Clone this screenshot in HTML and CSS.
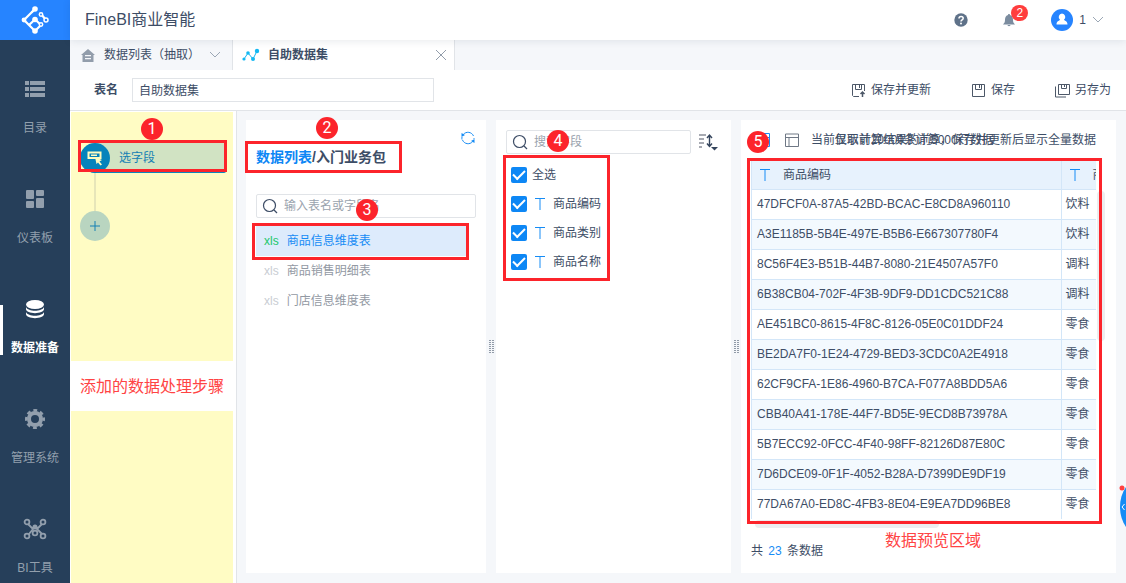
FILE: index.html
```html
<!DOCTYPE html>
<html lang="zh-CN">
<head>
<meta charset="utf-8">
<title>FineBI商业智能</title>
<link rel="stylesheet" href="styles.css">
</head>
<body>
<div class="app">
  <nav class="sidebar">
    <a class="logo" href="#" aria-label="FineBI">
      <svg width="28" height="28" viewBox="0 0 28 28" fill="none" stroke="#fff" stroke-width="2.2">
        <path d="M14 3L3 14l11 11"/><path d="M14 3l-3.500 3.500M14 25l6-6"/><path d="M8 19l6-5.500 5 4.500M20 8l5 6"/>
        <g fill="#fff" stroke="none"><circle cx="14" cy="3" r="2.800"/><circle cx="3" cy="14" r="2.400"/><circle cx="14" cy="13.500" r="2.800"/><circle cx="14" cy="25" r="2.800"/></g>
        <g fill="#2684ff" stroke-width="1.500"><circle cx="20" cy="8.500" r="1.700"/><circle cx="25" cy="14" r="2"/><circle cx="20" cy="18.500" r="1.700"/></g>
      </svg>
    </a>
    <a class="nav-item" href="#">
      <svg width="22" height="22" viewBox="0 0 22 22" fill="currentColor"><path d="M1 3h4v4H1zM6 3h15v4H6zM1 9h4v4H1zM6 9h15v4H6zM1 15h4v4H1zM6 15h15v4H6z"/></svg>
      <span>目录</span>
    </a>
    <a class="nav-item" href="#">
      <svg width="22" height="22" viewBox="0 0 22 22" fill="currentColor"><rect x="2" y="2" width="8" height="9" rx="1"/><rect x="12" y="2" width="8" height="6" rx="1"/><rect x="2" y="13" width="8" height="7" rx="1"/><rect x="12" y="10" width="8" height="10" rx="1"/></svg>
      <span>仪表板</span>
    </a>
    <a class="nav-item active" href="#">
      <svg width="22" height="22" viewBox="0 0 22 22" fill="currentColor"><ellipse cx="11" cy="6.500" rx="9" ry="4.500"/><path d="M2 9c2 5 16 5 18 0v2c0 5.500-18 5.500-18 0zM2 14c2 5 16 5 18 0v2c0 5.500-18 5.500-18 0z"/></svg>
      <span>数据准备</span>
    </a>
    <a class="nav-item" href="#">
      <svg width="22" height="22" viewBox="0 0 22 22" fill="none" stroke="currentColor"><circle cx="11" cy="11" r="6" stroke-width="4"/><circle cx="11" cy="11" r="8.700" stroke-width="2.600" stroke-dasharray="3.830 3" stroke-dashoffset="1.900"/></svg>
      <span>管理系统</span>
    </a>
    <a class="nav-item" href="#">
      <svg width="24" height="22" viewBox="0 0 24 22" fill="none" stroke="currentColor" stroke-width="1.800"><path d="M5 6l5 5-4 5M19 6l-5 5 5 5M9 11l3-3 3 3"/><circle cx="4" cy="4" r="2.400"/><circle cx="20" cy="4" r="2.400"/><circle cx="4" cy="18" r="2.400"/><circle cx="20" cy="18" r="2.400"/><circle cx="12" cy="15" r="2.400"/><circle cx="12" cy="9" r="1.600"/></svg>
      <span>BI工具</span>
    </a>
  </nav>

  <div class="main">
    <header class="topbar">
      <h1>FineBI商业智能</h1>
      <button class="icon-btn" aria-label="帮助">
        <svg width="14" height="14" viewBox="0 0 14 14"><circle cx="7" cy="7" r="6.700" fill="#5f7289"/><path d="M5 5.500c0-2.800 4.200-2.600 4.200-.2C9.200 6.900 7 6.800 7 8.500" fill="none" stroke="#fff" stroke-width="1.500"/><circle cx="7" cy="10.600" r="1" fill="#fff"/></svg>
      </button>
      <button class="icon-btn bell" aria-label="通知">
        <svg width="12" height="14" viewBox="0 0 12 14" fill="#7b8c9f"><path d="M6 1c.8 0 1 .6 1 1 2.500.6 3 3 3 5 0 2.500.8 3 2 4.500H0C1.200 10 2 9.500 2 7c0-2 .5-4.400 3-5 0-.4.200-1 1-1zM4.500 12h3c0 1.500-3 1.500-3 0z"/></svg>
        <span class="count">2</span>
      </button>
      <button class="user">
        <svg width="22" height="22" viewBox="0 0 22 22"><circle cx="11" cy="11" r="11" fill="#2684ff"/><path d="M11 4.500a3.500 3.500 0 0 1 2 6.200c0 1 3.500.8 3.500 4.800H5.500c0-4 3.500-3.800 3.500-4.800a3.500 3.500 0 0 1 2-6.200z" fill="#fff"/></svg>
        <span>1</span>
        <svg width="12" height="8" viewBox="0 0 12 8" fill="none" stroke="#9ba7b5"><path d="M1 1l5 5 5-5"/></svg>
      </button>
    </header>

    <div class="tabs">
      <a class="tab list-tab" href="#">
        <svg width="14" height="13" viewBox="0 0 14 13"><path d="M7 0l7 6h-1.500v7h-11V6H0z" fill="#929dab"/><path d="M4 6h6v1.300H4zM4 9h6v1.300H4z" fill="#f5f7fa"/></svg>
        <span>数据列表（抽取）</span>
        <svg width="12" height="8" viewBox="0 0 12 8" fill="none" stroke="#9ba7b5"><path d="M1 1l5 5 5-5"/></svg>
      </a>
      <div class="tab current">
        <svg width="18" height="14" viewBox="0 0 18 14" fill="#14b8f2"><path d="M2 11l4-6 5 6 4-8" fill="none" stroke="#14b8f2"/><circle cx="2" cy="11" r="1.600"/><circle cx="6" cy="5" r="1.800"/><circle cx="11" cy="11" r="2"/><circle cx="15" cy="3" r="2.200"/></svg>
        <span>自助数据集</span>
        <button class="icon-btn close" aria-label="关闭"><svg width="12" height="12" viewBox="0 0 12 12" stroke="#929dab"><path d="M1 1l10 10M11 1L1 11"/></svg></button>
      </div>
    </div>

    <div class="toolbar">
      <label for="table-name">表名</label>
      <input class="field name-field" id="table-name" type="text" value="自助数据集">
      <div class="actions">
        <button class="action"><svg width="15" height="15" viewBox="0 0 15 15" fill="none" stroke="#4d5868"><path d="M8 13.500H2.500l-1-1v-11h12V8M4.500 1.500v5h6v-5M8.500 2v3"/><path d="M11.500 14v-5M9.500 11l2-2 2 2" stroke-width="1.500"/></svg>保存并更新</button>
        <button class="action"><svg width="15" height="15" viewBox="0 0 15 15" fill="none" stroke="#4d5868"><path d="M1.500 1.500h12v12h-12zM4.500 1.500v5h6v-5M8.500 2v3"/></svg>保存</button>
        <button class="action"><svg width="15" height="15" viewBox="0 0 15 15" fill="none" stroke="#4d5868"><path d="M3.500 1.500h11v10h-11zM6.500 1.500v4h5v-4M9.500 2v2M.5 3.500v10.500H11"/></svg>另存为</button>
      </div>
    </div>

    <div class="workspace">
      <aside class="steps">
        <div class="steps-top">
          <div class="step-wrap">
            <button class="step"><span class="step-icon"><svg width="16" height="16" viewBox="0 0 16 16"><path d="M1.500 2.500h12v5.500h-12z" fill="none" stroke="#fffcc0" stroke-width="2"/><path d="M4 4.500h6v1.500H4z" fill="#fffcc0"/><path d="M8 7l7 3-2.500 1.500 2.500 3-1.500 1-2.500-3L9.500 14z" fill="#fffcc0"/></svg></span>选字段</button>
            <span class="mark-box"></span><span class="mark-num">1</span>
          </div>
          <span class="connector"></span>
          <button class="add" aria-label="添加步骤"><svg width="10" height="10" viewBox="0 0 10 10" stroke="#1480b4"><path d="M5 0v10M0 5h10"/></svg></button>
        </div>
        <p class="note steps-note">添加的数据处理步骤</p>
        <div class="steps-rest"></div>
      </aside>

      <div class="panels">
        <section class="panel tables">
          <button class="icon-btn refresh" aria-label="刷新"><svg width="14" height="14" viewBox="0 0 14 14" fill="none" stroke="#168cf5"><path d="M2.300 3.500A6 6 0 0 1 12.500 5M11.700 10.500A6 6 0 0 1 1.500 9M1 8.500a6 6 0 0 1 0-2.500M13 8a6 6 0 0 0 0-1"/><path d="M.5 2v4l3.500-2zM13.500 12V8L10 10z" fill="#168cf5" stroke="none"/></svg></button>
          <div class="crumbs"><a href="#">数据列表</a>/入门业务包
            <span class="mark-box"></span><span class="mark-num">2</span>
          </div>
          <div class="search">
            <svg width="16" height="16" viewBox="0 0 16 16" fill="none" stroke="#3d4d66" stroke-width="1.200"><circle cx="7.500" cy="7.500" r="6"/><path d="M12 12l3 3"/></svg>
            <input type="text" aria-label="输入表名或字段名" placeholder="输入表名或字段名">
            <span class="mark-num">3</span>
          </div>
          <ul class="table-list">
            <li><a class="selected" href="#"><b>xls</b>商品信息维度表<span class="mark-box"></span></a></li>
            <li><a href="#"><b>xls</b>商品销售明细表</a></li>
            <li><a href="#"><b>xls</b>门店信息维度表</a></li>
          </ul>
        </section>
        <div class="grip"><svg width="5" height="13" viewBox="0 0 5 13"><path d="M1 0v13M4 0v13" stroke="#5c6b7d" stroke-width="1.300" stroke-dasharray="1 1"/></svg></div>

        <section class="panel fields">
          <div class="search-row">
            <div class="search">
              <svg width="16" height="16" viewBox="0 0 16 16" fill="none" stroke="#3d4d66" stroke-width="1.200"><circle cx="7.500" cy="7.500" r="6"/><path d="M12 12l3 3"/></svg>
              <input type="text" aria-label="搜索字段" placeholder="搜索字段">
              <span class="mark-num">4</span>
            </div>
            <button class="icon-btn" aria-label="排序"><svg width="20" height="18" viewBox="0 0 20 18" fill="none" stroke="#8a8f99" stroke-width="1.600"><path d="M1 2h7M1 6h5M1 10h5M1 14h3"/><path d="M11.500 2v11M9 5l2.500-3L14 5M9 10.500l2.500 3 2.500-3" stroke="#34445c" stroke-width="1.400"/><path d="M13 14h7l-3.500 3.500z" fill="#34445c" stroke="none"/></svg></button>
          </div>
          <div class="checks">
            <label><input type="checkbox" checked>全选</label>
            <label><input type="checkbox" checked><svg class="type" width="10" height="12" viewBox="0 0 10 12"><path d="M0 .5h10M5 1v11" stroke="#168cf5"/></svg>商品编码</label>
            <label><input type="checkbox" checked><svg class="type" width="10" height="12" viewBox="0 0 10 12"><path d="M0 .5h10M5 1v11" stroke="#168cf5"/></svg>商品类别</label>
            <label><input type="checkbox" checked><svg class="type" width="10" height="12" viewBox="0 0 10 12"><path d="M0 .5h10M5 1v11" stroke="#168cf5"/></svg>商品名称</label>
            <span class="mark-box"></span>
          </div>
        </section>
        <div class="grip"><svg width="5" height="13" viewBox="0 0 5 13"><path d="M1 0v13M4 0v13" stroke="#5c6b7d" stroke-width="1.300" stroke-dasharray="1 1"/></svg></div>

        <section class="panel preview">
          <div class="preview-bar">
            <button class="icon-btn" aria-label="数据视图"><svg width="14" height="14" viewBox="0 0 14 14" fill="none" stroke="#168cf5"><path d="M.5.5h13v13H.5zM.5 4.500h13M5 4.500v9"/></svg></button>
            <button class="icon-btn" aria-label="字段视图"><svg width="14" height="14" viewBox="0 0 14 14" fill="none" stroke="#6f7885"><path d="M.5 1h13v12.500H.5zM.5 4.500h13M4 4.500v9"/></svg></button>
            <div class="hints"><span>当前显示计算结果的前5000行数据</span><span>仅取前20000条计算，保存并更新后显示全量数据</span></div>
            <span class="mark-num">5</span>
          </div>
          <div class="grid">
            <div class="grid-view">
              <table>
                <colgroup><col class="code-col"><col class="kind-col"></colgroup>
                <thead><tr>
                  <th><svg class="type" width="10" height="12" viewBox="0 0 10 12"><path d="M0 .5h10M5 1v11" stroke="#168cf5"/></svg>商品编码</th>
                  <th><svg class="type" width="10" height="12" viewBox="0 0 10 12"><path d="M0 .5h10M5 1v11" stroke="#168cf5"/></svg>商品类别</th>
                </tr></thead>
                <tbody>
                  <tr><td>47DFCF0A-87A5-42BD-BCAC-E8CD8A960110</td><td>饮料</td></tr>
                  <tr><td>A3E1185B-5B4E-497E-B5B6-E667307780F4</td><td>饮料</td></tr>
                  <tr><td>8C56F4E3-B51B-44B7-8080-21E4507A57F0</td><td>调料</td></tr>
                  <tr><td>6B38CB04-702F-4F3B-9DF9-DD1CDC521C88</td><td>调料</td></tr>
                  <tr><td>AE451BC0-8615-4F8C-8126-05E0C01DDF24</td><td>零食</td></tr>
                  <tr><td>BE2DA7F0-1E24-4729-BED3-3CDC0A2E4918</td><td>零食</td></tr>
                  <tr><td>62CF9CFA-1E86-4960-B7CA-F077A8BDD5A6</td><td>零食</td></tr>
                  <tr><td>CBB40A41-178E-44F7-BD5E-9ECD8B73978A</td><td>零食</td></tr>
                  <tr><td>5B7ECC92-0FCC-4F40-98FF-82126D87E80C</td><td>零食</td></tr>
                  <tr><td>7D6DCE09-0F1F-4052-B28A-D7399DE9DF19</td><td>零食</td></tr>
                  <tr><td>77DA67A0-ED8C-4FB3-8E04-E9EA7DD96BE8</td><td>零食</td></tr>
                </tbody>
              </table>
            </div>
            <span class="bar-v"></span><span class="bar-h"></span>
            <span class="mark-box"></span>
          </div>
          <div class="total">
            <span>共 <em>23</em> 条数据</span>
            <p class="note preview-note">数据预览区域</p>
          </div>
        </section>
      </div>
    </div>
  </div>
  <button class="assistant" aria-label="展开助手"><svg width="7" height="54" viewBox="0 0 7 54"><path d="M7 7C-1 18-1 36 7 47z" fill="#168cf5"/><path d="M5.500 24L3 27l2.500 3" fill="none" stroke="#fff"/><circle cx="3" cy="8" r="2.500" fill="#ff4040"/></svg></button>
</div>
</body>
</html>
```
FILE: styles.css
```css
* { box-sizing: border-box; }
body {
  margin: 0;
  color: #3d4d66;
  font: 12px/20px "Liberation Sans", "Noto Sans CJK SC", sans-serif;
}
button, input { font: inherit; color: inherit; }
button { padding: 0; border: 0; background: none; cursor: pointer; }
a { color: inherit; text-decoration: none; }
p, h1, ul { margin: 0; padding: 0; }
svg { display: block; flex: none; }
.app { display: flex; height: 100vh; overflow: hidden; position: relative; }

/* Sidebar */
.sidebar { flex: none; width: 70px; background: #263f5a; color: #929fad; overflow: hidden; }
.logo { display: flex; align-items: center; justify-content: center; height: 40px; margin-bottom: 13px; background: #2684ff; }
.nav-item { display: flex; flex-direction: column; align-items: center; justify-content: center; gap: 18px; height: 110px; position: relative; }
.nav-item.active { color: #fff; font-weight: bold; }
.nav-item.active::before { content: ""; position: absolute; left: 0; top: 32px; width: 3px; height: 50px; background: #fff; }

/* Header */
.main { flex: 1; min-width: 0; display: flex; flex-direction: column; }
.topbar { display: flex; align-items: center; height: 40px; padding: 0 22px 0 15px; position: relative; box-shadow: 0 1px 8px #0f29481a; background: #fff; }
.topbar h1 { flex: 1; font-size: 16px; font-weight: normal; }
.icon-btn { flex: none; display: flex; }
.bell { margin: 0 36px 0 35px; position: relative; }
.count { position: absolute; left: 8px; top: -8px; width: 17px; height: 16px; border-radius: 8px; background: #ff3d3d; color: #fff; line-height: 16px; }
.user { display: flex; align-items: center; gap: 6px; }

.tabs { display: flex; height: 30px; background: #f5f7fa; }
.tab { display: flex; align-items: center; border-right: 1px solid #e1e4e8; }
.list-tab { gap: 9px; padding: 0 11px; }
.current { width: 222px; gap: 8px; padding: 0 7px 0 9px; background: #fff; font-weight: bold; }
.close { margin-left: auto; }

.toolbar { display: flex; align-items: center; height: 41px; padding: 0 15px 0 24px; border-bottom: 1px solid #e1e4e8; }
.toolbar label { margin-right: 14px; font-weight: bold; }
.field { height: 24px; padding: 0 6px 2px; border: 1px solid #e1e4e8; }
.name-field { width: 302px; }
.actions { display: flex; gap: 40px; margin-left: auto; }
.action { display: flex; align-items: center; gap: 5px; }

/* Callouts */
.mark-box { position: absolute; inset: -3px; border: 3px solid #fc242b; pointer-events: none; }
.mark-num { position: absolute; width: 22px; height: 22px; border-radius: 50%; background: #fc242b; color: #fff; font: 16px/22px Roboto, sans-serif; text-align: center; }
.note { color: #ff4444; font-size: 16px; }

/* Steps */
.workspace { flex: 1; min-height: 0; display: flex; }
.steps { flex: none; display: flex; flex-direction: column; width: 167px; padding: 1px 3px 0 1px; border-right: 1px solid #e1e4e8; }
.steps-top { height: 249px; padding: 31px 7px 0 9px; background: #fffcc4; }
.step-wrap { position: relative; }
.step-wrap .mark-box { inset: -3px -1px 1px -2px; }
.step-wrap .mark-num { left: 61px; top: -25px; }
.step { display: flex; align-items: center; gap: 9px; width: 100%; height: 30px; border-bottom: 1px solid #0f85bd; border-radius: 15px 2px 2px 15px; background: #d1e3c3; color: #1480b4; }
.step-icon { display: grid; place-items: center; width: 30px; height: 30px; border-radius: 50%; background: #0683bb; }
.connector { display: block; width: 2px; height: 38px; margin-left: 14px; background: #e7e6b9; }
.add { display: grid; place-items: center; width: 30px; height: 30px; border-radius: 50%; background: #b9d5c0; }
.steps-note { height: 50px; line-height: 52px; text-align: center; }
.steps-rest { flex: 1; background: #fffcc4; }

/* Panels */
.panels { flex: 1; min-width: 0; display: flex; padding: 9px 10px 10px 9px; background: #f5f7fa; }
.panel { padding: 10px; background: #fff; }
.grip { flex: none; display: grid; place-items: center; width: 10px; }
.tables { flex: none; width: 240px; }
.refresh { margin: 1px 1px 0 auto; }
.crumbs { display: table; margin-top: 2px; position: relative; font-size: 14px; font-weight: bold; white-space: nowrap; }
.crumbs a { color: #0d87f5; }
.crumbs .mark-box { inset: -6px -16px -6px -11px; }
.crumbs .mark-num { left: 60px; top: -30px; }
.search { display: flex; align-items: center; gap: 6px; flex: 1; min-width: 0; height: 24px; padding: 0 5px; border: 1px solid #e1e4e8; border-radius: 2px; position: relative; }
.search input { flex: 1; min-width: 0; padding: 0; border: 0; outline: 0; background: none; }
.search input::placeholder { color: #9aa3ae; }
.tables .search { margin-top: 27px; }
.tables .search .mark-num { left: 99px; top: 4px; }
.table-list { list-style: none; margin-top: 8px; }
.table-list a { display: flex; align-items: center; gap: 8px; height: 30px; padding-left: 8px; color: #9299a3; position: relative; }
.table-list b { color: #c9cdd3; font-weight: normal; }
.table-list .selected { margin-right: 10px; background: #ddebfc; color: #168cf5; }
.table-list .selected b { color: #22c76a; }
.table-list .mark-box { inset: -3px -3px -4px -4px; }

.fields { flex: none; width: 235px; }
.search-row { display: flex; align-items: center; gap: 7px; padding-right: 3px; }
.fields .search .mark-num { left: 40px; top: -1px; }
.checks { display: table; margin: 6px 0 0 5px; position: relative; }
.checks label { display: flex; align-items: center; height: 29px; }
.checks input { appearance: none; display: grid; place-items: center; width: 16px; height: 16px; margin: 0 5px 0 0; border-radius: 2px; background: #0d87f5; }
.checks input::before { content: ""; width: 10px; height: 5px; margin-bottom: 3px; border: solid #fff; border-width: 0 0 2px 2px; transform: rotate(-45deg); }
.checks .type { margin: 0 8px 0 3px; }
.checks .mark-box { inset: -5px -9px -5px -8px; }

.preview { flex: 1; min-width: 0; display: flex; flex-direction: column; }
.preview-bar { display: flex; align-items: center; gap: 15px; height: 20px; padding: 0 10px 0 5px; position: relative; }
.preview-bar .mark-num { left: -4px; top: 1px; }
.hints { flex: 1; min-width: 0; display: grid; margin-left: -3px; white-space: nowrap; }
.hints span { grid-area: 1 / 1; justify-self: start; }
.hints span + span { justify-self: end; }
.grid { flex: 1; min-height: 0; margin: 11px 10px 0 0; position: relative; }
.grid-view { height: 100%; overflow: hidden; border-left: 1px solid #d3e6f8; }
table { width: 430px; border-collapse: collapse; table-layout: fixed; }
.code-col { width: 309px; }
th, td { height: 30px; padding: 0 5px; border: solid #d3e6f8; border-width: 0 1px 1px 0; text-align: left; font-weight: normal; }
td + td { padding-left: 4px; }
th { height: 28px; padding: 0 8px; background: #e7f2fd; }
th .type { display: inline-block; margin-right: 13px; vertical-align: -2px; }
tbody tr:nth-child(even) { background: #f3f9fe; }
.bar-v, .bar-h { position: absolute; border-radius: 4px; background: #eceef0; }
.bar-v { right: -9px; top: 30px; width: 8px; height: 150px; }
.bar-h { left: 4px; bottom: -9px; width: 184px; height: 8px; }
.grid .mark-box { inset: -3px -6px -5px -4px; }
.total { display: flex; align-items: center; height: 44px; padding-top: 20px; position: relative; }
.total em { margin: 0 2px; color: #168cf5; font-style: normal; }
.preview-note { margin: -20px 0 0 62px; }
.assistant { position: absolute; right: 0; top: 480px; }
```
